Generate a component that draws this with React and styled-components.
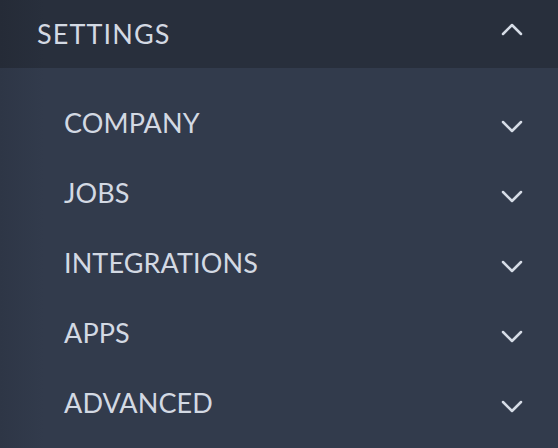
import React, { useState } from "react";
import styled, { createGlobalStyle } from "styled-components";

const GlobalStyle = createGlobalStyle`
  html, body {
    margin: 0;
    padding: 0;
    background: #323b4c;
  }
  body {
    font-family: Lato, "Open Sans", sans-serif;
  }
`;

const sections = ["COMPANY", "JOBS", "INTEGRATIONS", "APPS", "ADVANCED"];

const Chevron = ({ up }) => (
  <svg width="22" height="14" viewBox="0 0 22 14" fill="none">
    <path
      d={up ? "M2 12 L11 3 L20 12" : "M2 2 L11 11 L20 2"}
      stroke="#d6dce6"
      strokeWidth="2.5"
      strokeLinecap="round"
      strokeLinejoin="round"
    />
  </svg>
);

const App = () => {
  const [open, setOpen] = useState(true);

  return (
    <>
      <GlobalStyle />
      <Panel>
        <Header onClick={() => setOpen(!open)}>
          <HeaderTitle>SETTINGS</HeaderTitle>
          <IconBox $shift={-5}>
            <Chevron up={open} />
          </IconBox>
        </Header>
        {open && (
          <List>
            {sections.map((name) => (
              <Row key={name}>
                <RowTitle>{name}</RowTitle>
                <IconBox $shift={5}>
                  <Chevron />
                </IconBox>
              </Row>
            ))}
          </List>
        )}
      </Panel>
    </>
  );
};

export default App;

const Panel = styled.div`
  width: 558px;
  height: 448px;
  overflow: hidden;
  background: linear-gradient(to right, #2e3646 0px, #323b4c 44px);
`;

const Header = styled.div`
  display: flex;
  align-items: center;
  justify-content: space-between;
  height: 68px;
  padding: 0 35px 0 37px;
  background: linear-gradient(to right, #252b37 0px, #282f3c 44px);
  cursor: pointer;
`;

const HeaderTitle = styled.div`
  font-size: 27px;
  font-weight: 400;
  color: #d3d9e3;
  letter-spacing: 1.1px;
  margin-top: -2px;
`;

const IconBox = styled.div`
  display: flex;
  align-items: center;
  justify-content: center;
  transform: translateY(${(p) => p.$shift}px);
`;

const List = styled.div`
  display: flex;
  flex-direction: column;
  padding-top: 19px;
`;

const Row = styled.div`
  display: flex;
  align-items: center;
  justify-content: space-between;
  height: 70px;
  padding: 0 35px 0 64px;
  cursor: pointer;
`;

const RowTitle = styled.div`
  font-size: 27px;
  font-weight: 400;
  color: #d3d9e3;
  letter-spacing: 0.1px;
`;
